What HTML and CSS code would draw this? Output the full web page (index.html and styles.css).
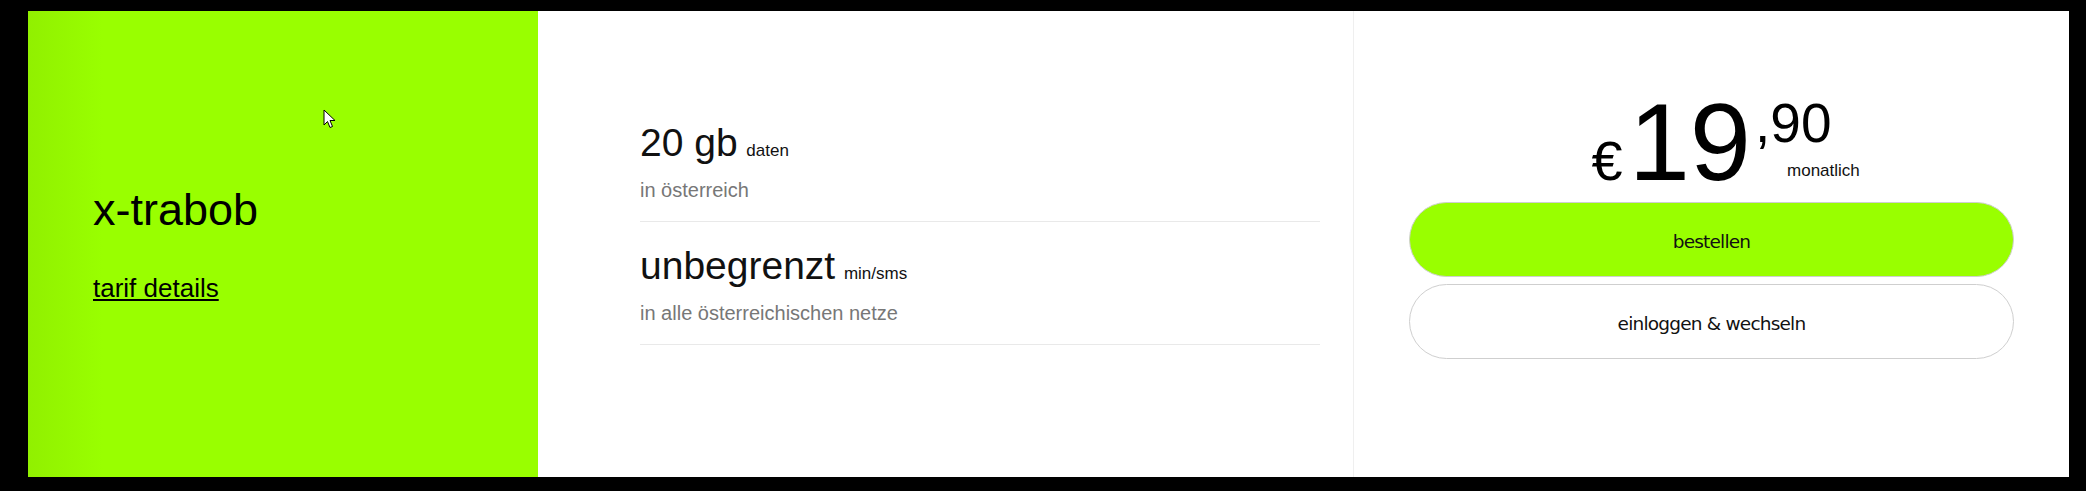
FILE: index.html
```html
<!DOCTYPE html>
<html lang="de">
<head>
  <meta charset="UTF-8" />
  <meta name="viewport" content="width=device-width, initial-scale=1.0"/>
  <title>x-trabob</title>
  <link rel="stylesheet" href="styles.css">
</head>
<body>

  <!-- Tarif Karte -->
  <div class="tarif">

    <div class="tarif-name">
      <h2>x-trabob</h2>
      <a href="#">tarif details</a>
      <svg class="cursor" width="13" height="20" viewBox="0 0 13 20">
        <path d="M1 1 L1 16 L4.5 12.5 L7 18.5 L9.5 17.5 L7 11.5 L12 11.5 Z" fill="#fff" stroke="#000" stroke-width="1" stroke-linejoin="round"/>
      </svg>
    </div>

    <div class="tarif-features">
      <div class="feature">
        <div class="feature-title">20 gb<small> daten</small></div>
        <div class="feature-sub">in österreich</div>
      </div>
      <div class="feature">
        <div class="feature-title">unbegrenzt<small> min/sms</small></div>
        <div class="feature-sub">in alle österreichischen netze</div>
      </div>
    </div>

    <div class="tarif-order">
      <div class="price">
        <span class="currency">€</span>
        <span class="euros">19</span>
        <span class="cents">,90<span class="period">monatlich</span></span>
      </div>
      <a href="#" class="btn btn-order">bestellen</a>
      <a href="#" class="btn btn-switch">einloggen &amp; wechseln</a>
    </div>

  </div>

</body>
</html>
```

FILE: styles.css
```css
/* Genel stil */
body {
  background-color: #000;
  color: #000;
  font-family: "Liberation Sans", Arial, sans-serif;
  margin: 0;
  padding: 11px 17px 14px 28px;
}

/* Karte */
.tarif {
  display: flex;
  height: 466px;
  background: #fff;
}

/* Sol: Tarif adi */
.tarif-name {
  position: relative;
  width: 510px;
  flex-shrink: 0;
  box-sizing: border-box;
  padding-left: 65px;
  display: flex;
  flex-direction: column;
  justify-content: center;
  align-items: flex-start;
  background: linear-gradient(to right, #91f000 0, #99ff00 75px);
}
.tarif-name h2 {
  margin: 0 0 37px;
  font-size: 45px;
  font-weight: normal;
}
.tarif-name a {
  color: #000;
  font-size: 26px;
}
.cursor {
  position: absolute;
  left: 295px;
  top: 98px;
}

/* Orta: Ozellikler */
.tarif-features {
  width: 815px;
  flex-shrink: 0;
  box-sizing: border-box;
  padding: 0 33px 44px 102px;
  display: flex;
  flex-direction: column;
  justify-content: center;
}
.feature {
  padding: 22px 0 19px;
  border-bottom: 1px solid #e9e9e9;
}
.feature-title {
  font-size: 39px;
  color: #111;
  margin-bottom: 14px;
}
.feature-title small {
  font-size: 17px;
  margin-left: 4px;
}
.feature-sub {
  font-size: 20px;
  color: #777;
}

/* Sag: Fiyat ve butonlar */
.tarif-order {
  flex: 1;
  border-left: 1px solid #efefef;
  padding: 0 55px 42px;
  display: flex;
  flex-direction: column;
  justify-content: center;
}
.price {
  display: flex;
  justify-content: center;
  align-items: baseline;
  line-height: 1;
  margin-bottom: 5px;
}
.currency {
  font-size: 56px;
  margin-right: 6px;
}
.euros {
  font-size: 110px;
}
.cents {
  position: relative;
  align-self: flex-start;
  margin: 9px 0 0 4px;
  font-size: 55px;
}
.period {
  position: absolute;
  left: 32px;
  top: 66px;
  font-size: 17px;
  color: #111;
}
.btn {
  display: flex;
  justify-content: center;
  align-items: center;
  box-sizing: border-box;
  height: 75px;
  padding-top: 3px;
  border: 1px solid #cfcfcf;
  border-radius: 38px;
  font-family: Tahoma, "DejaVu Sans", sans-serif;
  font-size: 18.5px;
  letter-spacing: -0.8px;
  color: #111;
  text-decoration: none;
}
.btn-order {
  background: #99ff00;
  margin-bottom: 7px;
}
.btn-switch {
  background: #fff;
}
```
